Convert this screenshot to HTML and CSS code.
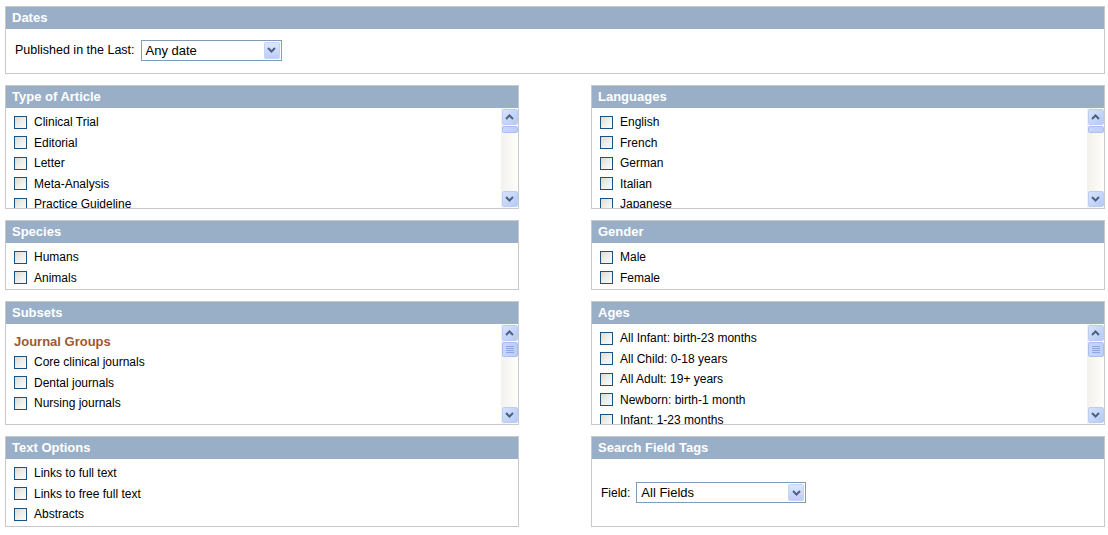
FILE: index.html
```html
<!DOCTYPE html>
<html>
<head>
<meta charset="utf-8">
<link rel="stylesheet" href="styles.css">
</head>
<body>
<div class="page">
  <section class="box full">
    <h2 class="hd">Dates</h2>
    <div class="dates-body">
      <span class="lbl">Published in the Last:</span>
      <div class="select sel-date"><span class="val">Any date</span><span class="arr"><svg width="9" height="6" viewBox="0 0 9 6"><path d="M1 1 L4.5 4.5 L8 1" fill="none" stroke="#4d6185" stroke-width="2"/></svg></span></div>
    </div>
  </section>

  <div class="grid">
    <section class="box">
      <h2 class="hd">Type of Article</h2>
      <div class="scrollwrap h100">
        <ul class="list">
          <li><input type="checkbox" class="cb"><span>Clinical Trial</span></li>
          <li><input type="checkbox" class="cb"><span>Editorial</span></li>
          <li><input type="checkbox" class="cb"><span>Letter</span></li>
          <li><input type="checkbox" class="cb"><span>Meta-Analysis</span></li>
          <li><input type="checkbox" class="cb"><span>Practice Guideline</span></li>
          <li><input type="checkbox" class="cb"><span>Randomized Controlled Trial</span></li>
        </ul>
        <div class="sb">
          <span class="btn"><svg width="9" height="6" viewBox="0 0 9 6"><path d="M1 5 L4.5 1.5 L8 5" fill="none" stroke="#4d6185" stroke-width="2"/></svg></span>
          <span class="thumb small"></span>
          <span class="track"></span>
          <span class="btn"><svg width="9" height="6" viewBox="0 0 9 6"><path d="M1 1 L4.5 4.5 L8 1" fill="none" stroke="#4d6185" stroke-width="2"/></svg></span>
        </div>
      </div>
    </section>

    <section class="box">
      <h2 class="hd">Languages</h2>
      <div class="scrollwrap h100">
        <ul class="list">
          <li><input type="checkbox" class="cb"><span>English</span></li>
          <li><input type="checkbox" class="cb"><span>French</span></li>
          <li><input type="checkbox" class="cb"><span>German</span></li>
          <li><input type="checkbox" class="cb"><span>Italian</span></li>
          <li><input type="checkbox" class="cb"><span>Japanese</span></li>
          <li><input type="checkbox" class="cb"><span>Russian</span></li>
        </ul>
        <div class="sb">
          <span class="btn"><svg width="9" height="6" viewBox="0 0 9 6"><path d="M1 5 L4.5 1.5 L8 5" fill="none" stroke="#4d6185" stroke-width="2"/></svg></span>
          <span class="thumb small"></span>
          <span class="track"></span>
          <span class="btn"><svg width="9" height="6" viewBox="0 0 9 6"><path d="M1 1 L4.5 4.5 L8 1" fill="none" stroke="#4d6185" stroke-width="2"/></svg></span>
        </div>
      </div>
    </section>

    <section class="box">
      <h2 class="hd">Species</h2>
      <ul class="list plain h46">
        <li><input type="checkbox" class="cb"><span>Humans</span></li>
        <li><input type="checkbox" class="cb"><span>Animals</span></li>
      </ul>
    </section>

    <section class="box">
      <h2 class="hd">Gender</h2>
      <ul class="list plain h46">
        <li><input type="checkbox" class="cb"><span>Male</span></li>
        <li><input type="checkbox" class="cb"><span>Female</span></li>
      </ul>
    </section>

    <section class="box">
      <h2 class="hd">Subsets</h2>
      <div class="scrollwrap h100">
        <ul class="list">
          <li class="group">Journal Groups</li>
          <li><input type="checkbox" class="cb"><span>Core clinical journals</span></li>
          <li><input type="checkbox" class="cb"><span>Dental journals</span></li>
          <li><input type="checkbox" class="cb"><span>Nursing journals</span></li>
        </ul>
        <div class="sb">
          <span class="btn"><svg width="9" height="6" viewBox="0 0 9 6"><path d="M1 5 L4.5 1.5 L8 5" fill="none" stroke="#4d6185" stroke-width="2"/></svg></span>
          <span class="thumb big"><i></i><i></i><i></i><i></i></span>
          <span class="track"></span>
          <span class="btn"><svg width="9" height="6" viewBox="0 0 9 6"><path d="M1 1 L4.5 4.5 L8 1" fill="none" stroke="#4d6185" stroke-width="2"/></svg></span>
        </div>
      </div>
    </section>

    <section class="box">
      <h2 class="hd">Ages</h2>
      <div class="scrollwrap h100">
        <ul class="list">
          <li><input type="checkbox" class="cb"><span>All Infant: birth-23 months</span></li>
          <li><input type="checkbox" class="cb"><span>All Child: 0-18 years</span></li>
          <li><input type="checkbox" class="cb"><span>All Adult: 19+ years</span></li>
          <li><input type="checkbox" class="cb"><span>Newborn: birth-1 month</span></li>
          <li><input type="checkbox" class="cb"><span>Infant: 1-23 months</span></li>
          <li><input type="checkbox" class="cb"><span>Preschool Child: 2-5 years</span></li>
        </ul>
        <div class="sb">
          <span class="btn"><svg width="9" height="6" viewBox="0 0 9 6"><path d="M1 5 L4.5 1.5 L8 5" fill="none" stroke="#4d6185" stroke-width="2"/></svg></span>
          <span class="thumb big"><i></i><i></i><i></i><i></i></span>
          <span class="track"></span>
          <span class="btn"><svg width="9" height="6" viewBox="0 0 9 6"><path d="M1 1 L4.5 4.5 L8 1" fill="none" stroke="#4d6185" stroke-width="2"/></svg></span>
        </div>
      </div>
    </section>

    <section class="box">
      <h2 class="hd">Text Options</h2>
      <ul class="list plain h67">
        <li><input type="checkbox" class="cb"><span>Links to full text</span></li>
        <li><input type="checkbox" class="cb"><span>Links to free full text</span></li>
        <li><input type="checkbox" class="cb"><span>Abstracts</span></li>
      </ul>
    </section>

    <section class="box">
      <h2 class="hd">Search Field Tags</h2>
      <div class="field-body">
        <span class="lbl">Field:</span>
        <div class="select sel-field"><span class="val">All Fields</span><span class="arr"><svg width="9" height="6" viewBox="0 0 9 6"><path d="M1 1 L4.5 4.5 L8 1" fill="none" stroke="#4d6185" stroke-width="2"/></svg></span></div>
      </div>
    </section>
  </div>
</div>
</body>
</html>
```

FILE: styles.css
```css
* { box-sizing: border-box; }
html, body { margin: 0; padding: 0; background: #fff; }
body {
  font-family: "Liberation Sans", Arial, sans-serif;
  font-size: 12px;
  color: #000;
}
.page {
  width: 1100px;
  margin: 6px 0 0 5px;
  display: flex;
  flex-direction: column;
  gap: 11px;
}
.grid {
  display: grid;
  grid-template-columns: 514px 514px;
  column-gap: 72px;
  row-gap: 11px;
  align-items: start;
}
.box {
  border: 1px solid #c9c9c9;
  background: #fff;
}
.hd {
  margin: 0;
  height: 22px;
  line-height: 22px;
  background: #99afc8;
  color: #fff;
  font-size: 13px;
  font-weight: bold;
  padding-left: 6px;
  overflow: hidden;
}
.dates-body {
  height: 44px;
  display: flex;
  align-items: center;
  padding: 0 0 2px 9px;
  gap: 6px;
}
.field-body {
  height: 67px;
  display: flex;
  align-items: center;
  padding: 0 0 0 9px;
  gap: 6px;
}
.lbl { font-size: 12px; }
.dates-body .lbl { font-size: 12.5px; }
.select {
  height: 21px;
  border: 1px solid #7f9db9;
  background: #fff;
  display: flex;
  align-items: center;
  justify-content: space-between;
  padding: 0 1px 0 4px;
  font-size: 13px;
}
.sel-date { width: 141px; }
.sel-field { width: 170px; }
.arr {
  width: 16px;
  height: 17px;
  border: 1px solid #c3d3fd;
  border-radius: 2px;
  background: linear-gradient(#dde7fd, #bccdf7);
  display: flex;
  align-items: center;
  justify-content: center;
}
.scrollwrap {
  display: flex;
  overflow: hidden;
}
.h100 { height: 100px; }
.h46 { height: 46px; }
.h67 { height: 67px; }
.list {
  list-style: none;
  margin: 0;
  padding: 4px 0 0 8px;
  flex: 1;
  overflow: hidden;
}
.list li {
  height: 20.5px;
  display: flex;
  align-items: center;
  white-space: nowrap;
}
.list li.group {
  color: #9b5a35;
  font-weight: bold;
  font-size: 13px;
  height: 21px;
  margin-top: 3px;
  padding-left: 0;
}
.cb {
  appearance: none;
  -webkit-appearance: none;
  width: 13px;
  height: 13px;
  margin: 0 7px 0 0;
  border: 1px solid #1c5180;
  background: linear-gradient(135deg, #dcdcd6 0%, #eeeeea 50%, #fbfbfa 100%);
  flex: none;
}
.sb {
  width: 17px;
  height: 100%;
  background: linear-gradient(90deg, #f3f1ec, #fefefb);
  display: flex;
  flex-direction: column;
  align-items: center;
  padding: 1px 0;
}
.btn {
  width: 16px;
  height: 16px;
  border: 1px solid #bccdf5;
  border-radius: 2px;
  background: linear-gradient(135deg, #d7e3fd, #b6c9f5);
  display: flex;
  align-items: center;
  justify-content: center;
  flex: none;
}
.thumb {
  width: 16px;
  border: 1px solid #a9bff0;
  border-radius: 2px;
  background: linear-gradient(90deg, #c8d7fb, #bccdf7);
  flex: none;
  margin-top: 1px;
  display: flex;
  flex-direction: column;
  align-items: center;
  justify-content: center;
  gap: 1px;
}
.thumb.small { height: 7px; }
.thumb.big { height: 15px; }
.thumb i {
  display: block;
  width: 8px;
  height: 1px;
  background: #8ea7e2;
}
.track { flex: 1; }
```
